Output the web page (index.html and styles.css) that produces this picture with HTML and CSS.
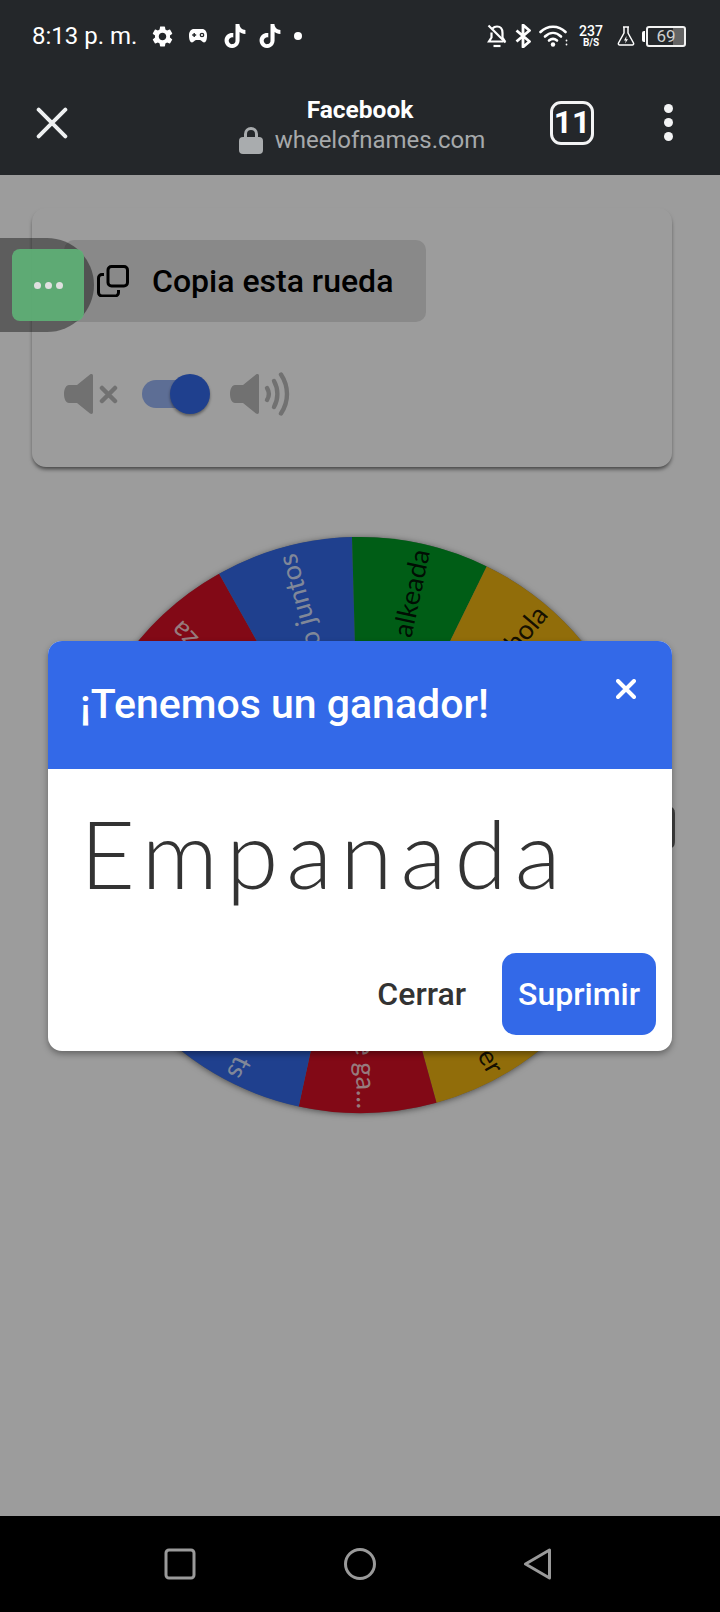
FILE: index.html
```html
<!DOCTYPE html>
<html lang="es">
<head>
    <meta charset="UTF-8">
    <meta name="viewport" content="width=device-width, initial-scale=1.0">
    <title>Wheel of Names</title>
    <link rel="stylesheet" href="styles.css">
</head>
<body>
    <header class="browser-top">
        <div class="status-bar">
            <div class="status-left">
                <span class="clock">8:13 p. m.</span>
                <svg class="gear" viewBox="0 0 24 24"><path fill="#fff" d="M19.14 12.94c.04-.3.06-.61.06-.94 0-.32-.02-.64-.07-.94l2.03-1.58a.49.49 0 0 0 .12-.61l-1.92-3.32a.488.488 0 0 0-.59-.22l-2.39.96c-.5-.38-1.03-.7-1.62-.94l-.36-2.54a.484.484 0 0 0-.48-.41h-3.84c-.24 0-.43.17-.47.41l-.36 2.54c-.59.24-1.13.57-1.62.94l-2.39-.96c-.22-.08-.47 0-.59.22L2.74 8.87c-.12.21-.08.47.12.61l2.03 1.58c-.05.3-.09.63-.09.94s.02.64.07.94l-2.03 1.58a.49.49 0 0 0-.12.61l1.92 3.32c.12.22.37.29.59.22l2.39-.96c.5.38 1.03.7 1.62.94l.36 2.54c.05.24.24.41.48.41h3.84c.24 0 .44-.17.47-.41l.36-2.54c.59-.24 1.13-.56 1.62-.94l2.39.96c.22.08.47 0 .59-.22l1.92-3.32c.12-.22.07-.47-.12-.61l-2.01-1.58zM12 15.6c-1.98 0-3.6-1.62-3.6-3.6s1.62-3.6 3.6-3.6 3.6 1.62 3.6 3.6-1.62 3.6-3.6 3.6z"/></svg>
                <svg class="gamepad" viewBox="0 0 18 14"><path fill="#fff" d="M5 0h8c3 0 5 2.500 5 6.500 0 4-1 7-3 7-1.700 0-2.500-2.500-4-2.500H7c-1.500 0-2.300 2.500-4 2.500-2 0-3-3-3-7C0 2.500 2 0 5 0z"/><path stroke="#24272a" stroke-width="1.400" d="M3.200 6h4M5.200 4v4"/><circle cx="13" cy="6" r="1.700" fill="none" stroke="#24272a" stroke-width="1.300"/></svg>
                <svg class="tiktok" viewBox="0 0 24 24"><path fill="#fff" d="M12.525.02c1.310-.02 2.610-.01 3.910-.02.08 1.530.63 3.090 1.750 4.170 1.120 1.110 2.700 1.620 4.240 1.790v4.030c-1.440-.05-2.890-.35-4.200-.97-.57-.26-1.100-.59-1.620-.93-.01 2.920.01 5.840-.02 8.750-.08 1.400-.54 2.790-1.350 3.940-1.310 1.920-3.580 3.170-5.910 3.210-1.430.08-2.860-.31-4.080-1.030-2.020-1.190-3.440-3.370-3.650-5.710-.02-.5-.03-1-.01-1.490.18-1.900 1.120-3.720 2.580-4.960 1.660-1.440 3.980-2.130 6.150-1.720.02 1.480-.04 2.960-.04 4.440-.99-.32-2.150-.23-3.020.37-.63.41-1.110 1.040-1.360 1.750-.21.51-.15 1.070-.14 1.610.24 1.640 1.820 3.020 3.500 2.870 1.120-.01 2.190-.66 2.770-1.610.19-.33.4-.67.41-1.060.1-1.790.06-3.570.07-5.360.01-4.030-.01-8.050.02-12.070z"/></svg>
                <svg class="tiktok" viewBox="0 0 24 24"><path fill="#fff" d="M12.525.02c1.310-.02 2.610-.01 3.910-.02.08 1.530.63 3.090 1.750 4.170 1.120 1.110 2.700 1.620 4.240 1.790v4.030c-1.440-.05-2.890-.35-4.200-.97-.57-.26-1.100-.59-1.620-.93-.01 2.920.01 5.840-.02 8.750-.08 1.400-.54 2.790-1.350 3.940-1.310 1.920-3.580 3.170-5.910 3.210-1.430.08-2.860-.31-4.080-1.030-2.020-1.190-3.440-3.370-3.650-5.710-.02-.5-.03-1-.01-1.490.18-1.900 1.120-3.720 2.580-4.960 1.660-1.440 3.980-2.130 6.150-1.720.02 1.480-.04 2.960-.04 4.440-.99-.32-2.150-.23-3.020.37-.63.41-1.110 1.040-1.360 1.750-.21.51-.15 1.070-.14 1.610.24 1.640 1.820 3.020 3.500 2.870 1.120-.01 2.190-.66 2.770-1.610.19-.33.4-.67.41-1.060.1-1.790.06-3.570.07-5.360.01-4.030-.01-8.050.02-12.070z"/></svg>
                <span class="status-dot"></span>
            </div>
            <div class="status-right">
                <svg class="bell-off" viewBox="0 0 20 24" fill="none" stroke="#fff" stroke-width="2.200"><path d="M5.500 4.500C6.800 3 8.300 2.500 10 2.500c3.500 0 5.500 2.700 5.500 6.500v4.500l2.500 4"/><path d="M4.500 8.500v5l-2.500 4h14.500"/><path d="M1.500 1.500l17 17"/><path d="M6.500 22h7"/></svg>
                <svg class="bluetooth" viewBox="0 0 16 24" fill="none" stroke="#fff" stroke-width="2.800" stroke-linejoin="round"><path d="M1.500 6.500l13 11L8 23V1l6.500 5.500-13 11"/></svg>
                <svg class="wifi" viewBox="0 0 30 22" fill="none" stroke="#fff" stroke-width="2.600" stroke-linecap="round"><path d="M1.500 7C8.500 0 19.500 0 26.500 7"/><path d="M6 11.500c5-4.700 11-4.700 16 0"/><path d="M10 15.500c2.600-2.200 5.400-2.200 8 0"/><circle cx="14" cy="19.500" r="2.200" fill="#fff" stroke="none"/><path stroke-width="1.800" d="M27.500 15.500h0M27.500 19.500h0"/></svg>
                <div class="net-speed"><span class="net-value">237</span><span class="net-unit">B/S</span></div>
                <svg class="flask" viewBox="0 0 18 20" fill="none" stroke="#fff" stroke-width="1.500" stroke-linejoin="round"><path d="M6 1h6M7 1v6L1.500 17c-.5 1 .2 2 1.200 2h12.600c1 0 1.700-1 1.200-2L11 7V1"/><path fill="#fff" stroke="none" d="M9.500 10L7 14.500h1.800L8 17.500l3-4.200H9.200z"/></svg>
                <div class="battery">
                    <span class="battery-nub"></span>
                    <div class="battery-body"><span class="battery-level">69</span></div>
                </div>
            </div>
        </div>
        <div class="toolbar">
            <svg class="toolbar-close" viewBox="0 0 36 36" stroke="#eef0f1" stroke-width="4.400" stroke-linecap="round"><path d="M3 3l30 30M33 3L3 33"/></svg>
            <div class="page-title">
                <div class="site-name">Facebook</div>
                <div class="site-url">
                    <svg class="lock" viewBox="0 0 24 28"><path fill="none" stroke="#a9acae" stroke-width="3" d="M6.500 13V8a5.500 5.500 0 0 1 11 0v5"/><rect y="11" width="24" height="17" rx="4" fill="#a9acae"/></svg>
                    <span>wheelofnames.com</span>
                </div>
            </div>
            <div class="toolbar-right">
                <div class="tab-count">11</div>
                <div class="menu-dots"><span></span><span></span><span></span></div>
            </div>
        </div>
    </header>

    <main class="page">
        <section class="options-card">
            <button class="copy-button">
                <svg class="copy-icon" viewBox="0 0 32 32" fill="none" stroke="#000" stroke-width="3"><rect x="11" y="1.500" width="19.500" height="19.500" rx="3.500"/><path d="M7 9.500H5A3.500 3.500 0 0 0 1.500 13v14.500A3.500 3.500 0 0 0 5 31h13a3.500 3.500 0 0 0 3.500-3.500V25"/></svg>
                <span>Copia esta rueda</span>
            </button>
            <div class="sound-row">
                <svg class="sound-off" viewBox="0 0 54 42"><path class="speaker" d="M5 12h8L26 1.500c1.500-1 3-.5 3 1.500v36c0 2-1.500 2.500-3 1.500L13 30H5c-3 0-5-4-5-9s2-9 5-9z"/><path d="M38 15l13 13M51 15L38 28" stroke="#b9b9b9" stroke-width="4.500" stroke-linecap="round"/></svg>
                <div class="toggle"><span class="toggle-thumb"></span></div>
                <svg class="sound-on" viewBox="0 0 60 44"><path class="speaker" d="M5 13h8L26 2.500c1.500-1 3-.5 3 1.500v36c0 2-1.500 2.500-3 1.500L13 31H5c-3 0-5-4-5-9s2-9 5-9z"/><g fill="none" stroke="#b9b9b9" stroke-width="4.400" stroke-linecap="round"><path d="M37 16c2.500 4 2.500 8 0 12"/><path d="M44 9c4.500 8 4.500 18 0 26"/><path d="M51 2.500c8 12 8 27 0 39"/></g></svg>
            </div>
        </section>

        <svg class="wheel" viewBox="0 0 680 600">
            <path class="pointer" d="M640 282h10c4 0 5 3 5 8v25c0 5-1 8-5 8h-10z"/>
            <g transform="translate(40 0)">
                <circle class="wheel-edge" cx="300" cy="300" r="288"/>
                <path class="red" d="M300 300L58.700 142.700A288 288 0 0 1 159.100 48.800z"/>
                <path class="blue" d="M300 300L159.100 48.800A288 288 0 0 1 292 12.100z"/>
                <path class="green" d="M300 300L292 12.100A288 288 0 0 1 426.700 41.400z"/>
                <path class="gold" d="M300 300L426.700 41.400A288 288 0 0 1 532.400 129.900z"/>
                <path class="red" d="M300 300L532.400 129.900A288 288 0 0 1 584.800 257.400z"/>
                <path class="blue" d="M300 300L584.800 257.400A288 288 0 0 1 572 394.700z"/>
                <path class="green" d="M300 300L572 394.700A288 288 0 0 1 496.800 510.300z"/>
                <path class="gold" d="M300 300L496.800 510.300A288 288 0 0 1 376.500 577.700z"/>
                <path class="red" d="M300 300L376.500 577.700A288 288 0 0 1 238.700 581.400z"/>
                <path class="blue" d="M300 300L238.700 581.400A288 288 0 0 1 114.900 520.600z"/>
                <path class="green" d="M300 300L114.900 520.600A288 288 0 0 1 33.500 409.300z"/>
                <path class="gold" d="M300 300L33.500 409.300A288 288 0 0 1 13.300 272.900z"/>
                <path class="blue" d="M300 300L13.300 272.900A288 288 0 0 1 58.700 142.700z"/>
                <text class="label light" transform="rotate(-133.100 300 300)" x="572" y="300">za</text>
                <text class="label light" transform="rotate(-105.450 300 300)" x="580" y="300">o juntos</text>
                <text class="label dark" transform="rotate(-77.750 300 300)" x="582" y="300">alkeada</text>
                <text class="label dark" transform="rotate(-50.050 300 300)" x="582" y="300">hola</text>
                <text class="label dark" transform="rotate(60.750 300 300)" x="582" y="300">er</text>
                <text class="label light" transform="rotate(88.450 300 300)" x="584" y="300">e ga...</text>
                <text class="label light" transform="rotate(116.150 300 300)" x="582" y="300">ts</text>
            </g>
        </svg>

        <div class="overlay"></div>

        <div class="side-tab">
            <div class="side-tab-button"><span></span><span></span><span></span></div>
        </div>

        <div class="winner-dialog">
            <div class="dialog-head">
                <h2>¡Tenemos un ganador!</h2>
                <svg class="dialog-close" viewBox="0 0 20 20" stroke="#fff" stroke-width="4" stroke-linecap="round"><path d="M2 2l16 16M18 2L2 18"/></svg>
            </div>
            <div class="winner-name">Empanada</div>
            <div class="dialog-actions">
                <button class="close-button">Cerrar</button>
                <button class="remove-button">Suprimir</button>
            </div>
        </div>
    </main>

    <footer class="nav-bar">
        <svg class="nav-icon" viewBox="0 0 32 32" fill="none" stroke="#9a9a9a" stroke-width="3"><rect x="2" y="2" width="28" height="28" rx="3"/></svg>
        <svg class="nav-icon" viewBox="0 0 32 32" fill="none" stroke="#9a9a9a" stroke-width="3"><circle cx="16" cy="16" r="14.500"/></svg>
        <svg class="nav-icon" viewBox="0 0 32 32" fill="none" stroke="#9a9a9a" stroke-width="3" stroke-linejoin="round"><path d="M1.500 16L25.500 2v28z"/></svg>
    </footer>
</body>
</html>
```

FILE: styles.css
```css
* {
    box-sizing: border-box;
}

body {
    font-family: Roboto, "Liberation Sans", sans-serif;
    margin: 0;
    padding: 0;
    width: 720px;
    height: 1612px;
    display: flex;
    flex-direction: column;
    overflow: hidden;
    background-color: #fff;
}

button {
    font-family: inherit;
    border: none;
    cursor: pointer;
}

/* phone status bar and browser toolbar */
.browser-top {
    height: 175px;
    flex-shrink: 0;
    background-color: #24272a;
    color: #fff;
}

.status-bar {
    height: 72px;
    display: flex;
    justify-content: space-between;
    align-items: center;
    padding: 0 32px;
}

.status-left,
.status-right {
    display: flex;
    align-items: center;
}

.clock {
    font-size: 24px;
    width: 118px;
}

.gear {
    width: 25px;
    height: 25px;
}

.gamepad {
    width: 18px;
    height: 14px;
    margin-left: 14px;
}

.tiktok {
    width: 24px;
    height: 24px;
    margin-left: 16px;
}

.tiktok + .tiktok {
    margin-left: 11px;
}

.status-dot {
    width: 8px;
    height: 8px;
    border-radius: 50%;
    background-color: #fff;
    margin-left: 12px;
}

.status-right {
    margin-right: 2px;
}

.bell-off {
    width: 20px;
    height: 24px;
}

.bluetooth {
    width: 16px;
    height: 24px;
    margin-left: 8px;
}

.wifi {
    width: 30px;
    height: 22px;
    margin-left: 8px;
}

.net-speed {
    display: flex;
    flex-direction: column;
    align-items: center;
    margin-left: 9px;
    width: 26px;
    font-weight: 500;
}

.net-value {
    font-size: 14px;
    line-height: 14px;
}

.net-unit {
    font-size: 10px;
    line-height: 10px;
    font-weight: 700;
}

.flask {
    width: 18px;
    height: 20px;
    margin-left: 13px;
}

.battery {
    display: flex;
    align-items: center;
    margin-left: 7px;
}

.battery-nub {
    width: 3px;
    height: 11px;
    background-color: #fff;
    border-radius: 2px 0 0 2px;
    margin-right: 1px;
}

.battery-body {
    width: 40px;
    height: 21px;
    border: 2px solid #f2f2f2;
    border-radius: 3px;
    background: linear-gradient(to right, transparent 70%, #646464 70%);
    text-align: center;
}

.battery-level {
    display: block;
    font-size: 17px;
    line-height: 17px;
    color: #cfcfcf;
}

.toolbar {
    height: 103px;
    display: grid;
    grid-template-columns: 1fr auto 1fr;
    align-items: center;
}

.toolbar-close {
    width: 32px;
    height: 32px;
    margin: -2px 0 0 36px;
}

.page-title {
    text-align: center;
    margin-top: 4px;
}

.site-name {
    font-size: 24.5px;
    font-weight: 700;
    line-height: 28px;
}

.site-url {
    display: flex;
    justify-content: center;
    align-items: center;
    gap: 12px;
    font-size: 24px;
    line-height: 32px;
    margin-left: 4px;
    color: #a6a9ab;
}

.lock {
    width: 24px;
    height: 28px;
}

.toolbar-right {
    display: flex;
    justify-content: flex-end;
    align-items: center;
    padding-right: 47px;
}

.tab-count {
    width: 44px;
    height: 44px;
    border: 3.5px solid #f2f3f4;
    border-radius: 11px;
    font-size: 32px;
    font-weight: 700;
    line-height: 36px;
    text-align: center;
    margin-top: -2px;
}

.menu-dots {
    display: flex;
    flex-direction: column;
    gap: 5px;
    margin: -2px 0 0 70px;
}

.menu-dots span {
    width: 9px;
    height: 9px;
    border-radius: 50%;
    background-color: #f2f3f4;
}

/* the wheel page under the dialog */
.page {
    flex: 1;
    position: relative;
    padding: 33px 48px 0 32px;
    background-color: #fff;
}

.options-card {
    height: 259px;
    background-color: #fff;
    border-radius: 14px;
    box-shadow: 0 3px 4px -1px rgba(0, 0, 0, 0.6);
    padding: 32px;
}

.copy-button {
    width: 362px;
    height: 82px;
    display: flex;
    align-items: center;
    gap: 23px;
    padding: 0 0 0 33px;
    background-color: #e0e0e0;
    border-radius: 10px;
    color: #000;
    font-size: 32px;
    font-weight: 500;
}

.copy-icon {
    width: 32px;
    height: 32px;
    flex-shrink: 0;
}

.sound-row {
    display: flex;
    align-items: center;
    margin-top: 50px;
}

.speaker {
    fill: #b9b9b9;
}

.sound-off {
    width: 54px;
    height: 42px;
}

.toggle {
    width: 48px;
    height: 28px;
    border-radius: 14px;
    background-color: #99b4f3;
    position: relative;
    margin-left: 24px;
}

.toggle-thumb {
    position: absolute;
    top: -6px;
    right: -20px;
    width: 40px;
    height: 40px;
    border-radius: 50%;
    background-color: #3369e8;
    box-shadow: 0 2px 3px rgba(0, 0, 0, 0.4);
}

.sound-on {
    width: 60px;
    height: 44px;
    margin-left: 40px;
}

.wheel {
    display: block;
    width: 680px;
    height: 600px;
    margin: 58px 0 0 -12px;
}

.wheel-edge {
    fill: #888;
    filter: drop-shadow(0 1px 3px rgba(0, 0, 0, 0.5));
}

.red {
    fill: #d50f25;
}

.blue {
    fill: #3369e8;
}

.green {
    fill: #009925;
}

.gold {
    fill: #eeb211;
}

.pointer {
    fill: #666;
}

.label {
    font-family: Lato, sans-serif;
    font-size: 27px;
    text-anchor: end;
    dominant-baseline: central;
}

.light {
    fill: #fff;
    fill-opacity: 0.8;
}

.dark {
    fill: #000;
    fill-opacity: 0.85;
}

.overlay {
    position: absolute;
    top: 0;
    left: 0;
    right: 0;
    bottom: 0;
    background-color: rgba(0, 0, 0, 0.39);
}

.side-tab {
    position: absolute;
    top: 63px;
    left: 0;
    width: 94px;
    height: 94px;
    border-radius: 0 47px 47px 0;
    background-color: rgba(0, 0, 0, 0.4);
    display: flex;
    align-items: center;
    padding-left: 12px;
}

.side-tab-button {
    width: 72px;
    height: 72px;
    border-radius: 8px;
    background-color: rgba(95, 176, 118, 0.93);
    display: flex;
    justify-content: center;
    align-items: center;
    gap: 4px;
}

.side-tab-button span {
    width: 7px;
    height: 7px;
    border-radius: 50%;
    background-color: #e0e0e0;
}

.winner-dialog {
    position: absolute;
    top: 466px;
    left: 48px;
    width: 624px;
    height: 410px;
    background-color: #fff;
    border-radius: 14px;
    box-shadow: 0 3px 6px rgba(0, 0, 0, 0.35);
    overflow: hidden;
}

.dialog-head {
    height: 128px;
    background-color: #3369e8;
    display: flex;
    justify-content: space-between;
    align-items: flex-start;
    padding: 40px 36px 0 32px;
}

.dialog-head h2 {
    margin: 0;
    color: #fff;
    font-size: 41px;
    font-weight: 500;
    line-height: 47px;
}

.dialog-close {
    width: 20px;
    height: 20px;
    margin-top: -2px;
}

.winner-name {
    font-family: Lato, sans-serif;
    font-weight: 300;
    font-size: 95px;
    line-height: 110px;
    letter-spacing: 8px;
    color: #333;
    padding-left: 32px;
    margin-top: 28px;
}

.dialog-actions {
    display: flex;
    justify-content: flex-end;
    align-items: center;
    gap: 36px;
    padding-right: 16px;
    margin-top: 46px;
}

.close-button {
    padding: 0;
    background: none;
    color: #333;
    font-size: 32px;
    font-weight: 500;
}

.remove-button {
    width: 154px;
    height: 82px;
    padding: 0;
    background-color: #3369e8;
    border-radius: 14px;
    color: #fff;
    font-size: 32px;
    font-weight: 500;
}

/* android navigation bar */
.nav-bar {
    height: 96px;
    flex-shrink: 0;
    background-color: #000;
    display: flex;
    justify-content: space-between;
    align-items: center;
    padding: 0 164px;
}

.nav-icon {
    width: 32px;
    height: 32px;
}
```
